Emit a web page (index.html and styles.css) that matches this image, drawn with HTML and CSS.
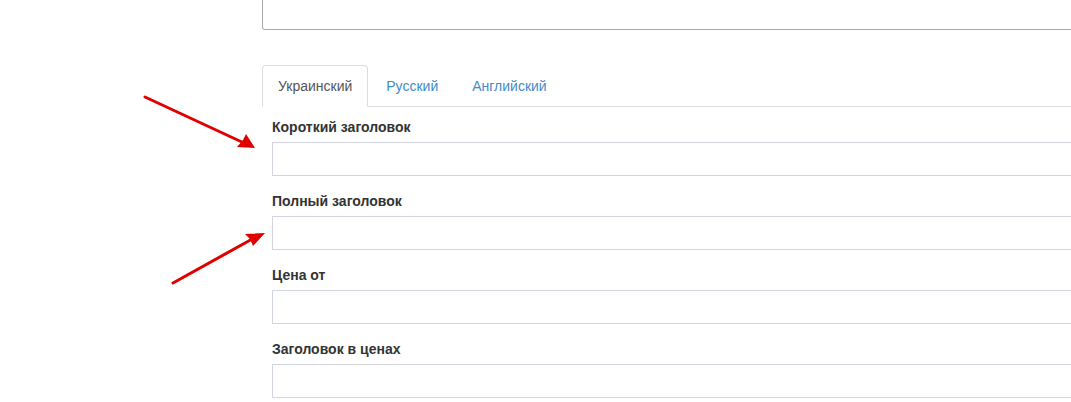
FILE: index.html
```
<!DOCTYPE html>
<html lang="ru">
    <head>
        <meta charset="UTF-8" />
        <title>Форма</title>
        <link rel="stylesheet" href="styles.css">
    </head>
    <body>
        <div class="page">
            <div class="top-area"></div>

            <ul class="nav-tabs">
                <li class="tab active"><a href="#">Украинский</a></li>
                <li class="tab"><a href="#">Русский</a></li>
                <li class="tab"><a href="#">Английский</a></li>
            </ul>

            <div class="tab-pane">
                <div class="form-group">
                    <label>Короткий заголовок</label>
                    <input class="form-control" type="text">
                </div>
                <div class="form-group">
                    <label>Полный заголовок</label>
                    <input class="form-control" type="text">
                </div>
                <div class="form-group">
                    <label>Цена от</label>
                    <input class="form-control" type="text">
                </div>
                <div class="form-group">
                    <label>Заголовок в ценах</label>
                    <input class="form-control" type="text">
                </div>
            </div>
        </div>

        <svg class="arrows" width="1071" height="402" viewBox="0 0 1071 402">
            <g stroke="#e00000" stroke-width="3" stroke-linecap="round">
                <line x1="145" y1="97" x2="244" y2="143" />
                <line x1="173" y1="283" x2="254" y2="238" />
            </g>
            <g fill="#e00000">
                <polygon points="255,148 237,147 243,140 246,134" />
                <polygon points="265,233 253,246 250,239 245,234" />
            </g>
        </svg>
    </body>
</html>
```

FILE: styles.css
```
* {
    box-sizing: border-box;
}
html,
body {
    margin: 0;
    padding: 0;
    height: 402px;
    overflow: hidden;
    background: #fff;
}
body {
    font-family: "Liberation Sans", Arial, sans-serif;
    font-size: 14px;
    color: #333;
    position: relative;
}
.page {
    padding-left: 262px;
    width: 1200px;
}
.top-area {
    height: 30px;
    border: 1px solid #a9a9a9;
    border-top: none;
    border-radius: 0 0 3px 3px;
}
.nav-tabs {
    list-style: none;
    margin: 35px 0 0;
    padding: 0;
    display: flex;
    border-bottom: 1px solid #ddd;
}
.tab {
    margin-right: 2px;
    margin-bottom: -1px;
}
.tab a {
    display: block;
    padding: 10px 15px;
    line-height: 20px;
    color: #428bca;
    text-decoration: none;
    border: 1px solid transparent;
    border-radius: 4px 4px 0 0;
}
.tab.active a {
    color: #555;
    background: #fff;
    border-color: #ddd;
    border-bottom-color: transparent;
}
.tab-pane {
    padding: 10px 10px 0;
}
.form-group {
    margin-bottom: 15px;
}
.form-group label {
    display: block;
    font-weight: bold;
    line-height: 20px;
    margin-bottom: 5px;
}
.form-control {
    display: block;
    width: 100%;
    height: 34px;
    border: 1px solid #d2d4e0;
    background: #fff;
    margin: 0;
    padding: 6px 12px;
}
.arrows {
    position: absolute;
    left: 0;
    top: 0;
    pointer-events: none;
}
```
